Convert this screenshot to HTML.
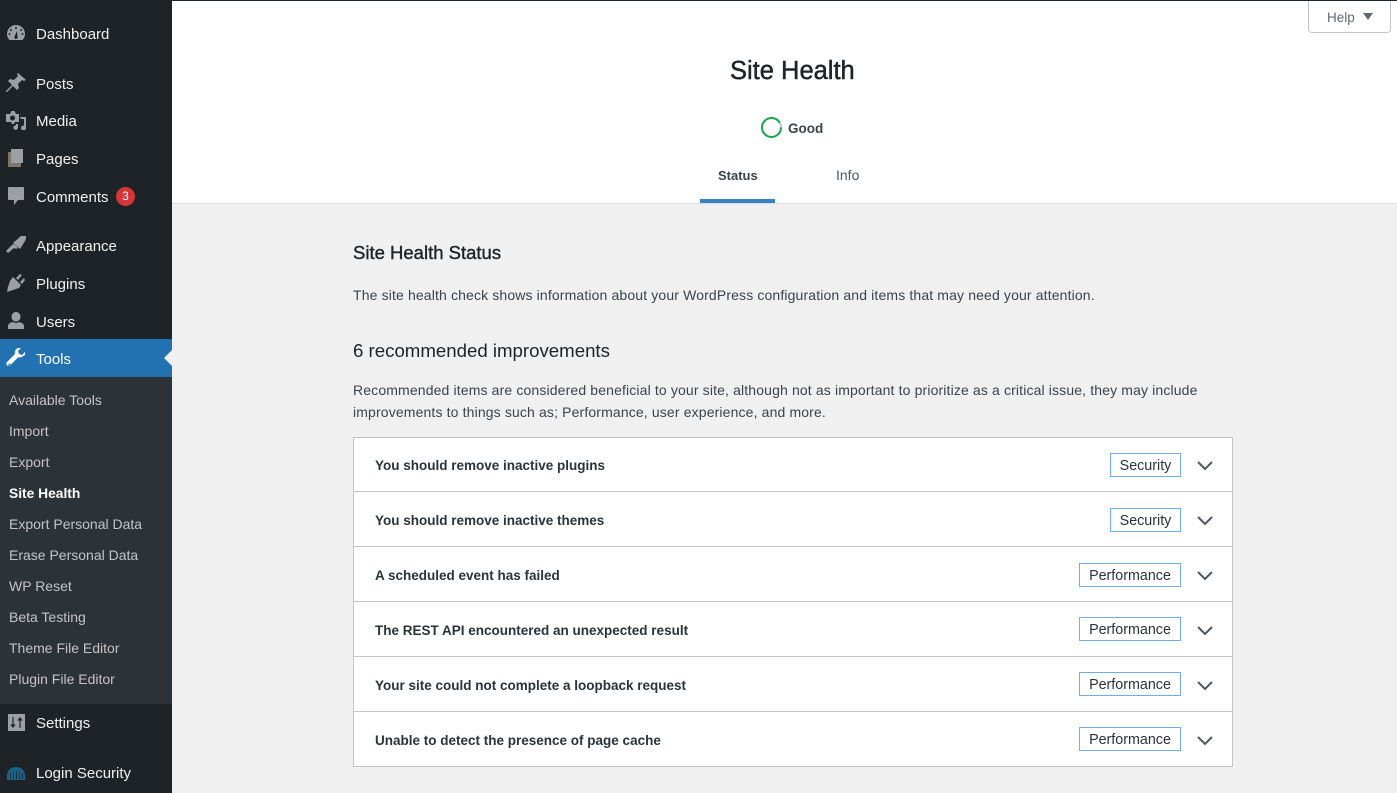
<!DOCTYPE html>
<html><head><meta charset="utf-8"><title>Site Health</title>
<style>
html,body{margin:0;padding:0}
body{position:relative;width:1397px;height:793px;overflow:hidden;background:#f0f0f1;font-family:"Liberation Sans",sans-serif;color:#3c434a;font-size:14px}
.a{position:absolute;white-space:nowrap;line-height:20px}
.m{left:36px;color:#f0f0f1;font-size:15px}
.s{left:9px;color:#c3c4c7;font-size:14px}
.i{position:absolute;left:6px;width:20px;height:20px;fill:#9ca0a4}
.row{position:absolute;left:354px;width:878px;border-top:1px solid #c3c4c7}
.t{left:375px;font-weight:700;font-size:13.5px;color:#2c3338}
.p{left:353px;font-size:14px;letter-spacing:.14px}
.b{position:absolute;border:1px solid #72aee6;height:22px;line-height:24px;font-size:14.3px;color:#2c3338;text-align:center;background:#fff}
.c{position:absolute;left:1197px;width:16px;height:10px;fill:none;stroke:#50575e;stroke-width:2}
</style></head><body>
<div style="position:absolute;left:0;top:0;width:172px;height:793px;background:#1d2327"></div>
<div style="position:absolute;left:0;top:339px;width:172px;height:38px;background:#2271b1"></div>
<div style="position:absolute;left:0;top:377px;width:172px;height:327px;background:#2c3338"></div>
<div style="position:absolute;left:164px;top:350px;border:8px solid transparent;border-left:0;border-right-color:#f0f0f1"></div>
<svg class="i" style="top:23px" viewBox="0 0 20 20"><path d="M10 2a9 9 0 0 0-9 9c0 2.500 1 4.500 2.500 6h13c1.500-1.500 2.500-3.500 2.500-6a9 9 0 0 0-9-9zm0 2a1 1 0 1 1 0 2 1 1 0 0 1 0-2zM5 6a1 1 0 1 1 0 2 1 1 0 0 1 0-2zm10 0a1 1 0 1 1 0 2 1 1 0 0 1 0-2zM3.500 10a1 1 0 1 1 0 2 1 1 0 0 1 0-2zm13 0a1 1 0 1 1 0 2 1 1 0 0 1 0-2zM11 8l.5 5.500a1.700 1.700 0 1 1-3 0z"/></svg>
<div class="a m" style="top:25px">Dashboard</div>
<svg class="i" style="top:73px" viewBox="0 0 20 20"><path d="M12 0l8 7-2 1-2-1-4 4 1 4-2 2-4-4-6 6H0v-1l6-6-4-4 2-2 4 1 4-4-1-2z"/></svg>
<div class="a m" style="top:75px">Posts</div>
<svg class="i" style="top:110px" viewBox="0 0 20 20"><path fill-rule="evenodd" d="M0 4h4l1.500-3h3L10 4h3v8H9l-1 2H6l-1-2H0zm6.500 1.500a2.500 2.500 0 1 0 0 5 2.500 2.500 0 0 0 0-5z"/><path d="M14 7h6v11a2.500 2.500 0 1 1-2-2.400V9h-3z"/><path d="M12 14v3.500a2.300 2.300 0 1 1-2-2.200V14z"/></svg>
<div class="a m" style="top:112px">Media</div>
<svg class="i" style="top:148px" viewBox="0 0 20 20"><path d="M2 4h4v11h9v4H2z" fill="#7c7768"/><path d="M5 1h12v14H5z"/></svg>
<div class="a m" style="top:150px">Pages</div>
<svg class="i" style="top:186px" viewBox="0 0 20 20"><path d="M3 1h14a1 1 0 0 1 1 1v11a1 1 0 0 1-1 1h-5l-4 5v-5H3a1 1 0 0 1-1-1V2a1 1 0 0 1 1-1z"/></svg>
<div class="a m" style="top:188px">Comments</div>
<div style="position:absolute;left:116px;top:187px;width:19px;height:19px;border-radius:50%;background:#d63638;color:#fff;font-size:12px;line-height:19px;text-align:center">3</div>
<svg class="i" style="top:235px" viewBox="0 0 20 20"><path d="M15 1h6l-2 5-5 8-7-6z"/><path d="M8 9l4 4-2 1-2-1-6 5-2-2 6-6z"/></svg>
<div class="a m" style="top:237px">Appearance</div>
<svg class="i" style="top:273px" viewBox="0 0 20 20"><path d="M7 4l8 8-2 3-3 1-6 2-3 1 1-5 2-6zM10 5l4-4 2 1-4 5zM14 9l4-4 1 2-3 4z"/></svg>
<div class="a m" style="top:275px">Plugins</div>
<svg class="i" style="top:311px" viewBox="0 0 20 20"><path d="M10 1a4.500 4.500 0 0 1 4.500 5c0 2.500-2 4.500-4.500 4.500S5.500 8.500 5.500 6A4.500 4.500 0 0 1 10 1zM7 11c2 1.200 4 1.200 6 0 3 .5 5 2 5 4v3H2v-3c0-2 2-3.500 5-4z"/></svg>
<div class="a m" style="top:313px">Users</div>
<svg class="i" style="top:348px;fill:#fff" viewBox="0 0 20 20"><path d="M19 4l-3 3-3-1-1-3 3-3c-2-.500-4 0-5 1.500-1.200 1.200-1.500 3-1 4.500l-8 8a2.200 2.200 0 0 0 3.200 3.200l8-8c1.500.5 3.300.2 4.500-1C18.900 7.900 19.500 6 19 4zM3.500 18a1.200 1.200 0 1 1 0-2.400 1.200 1.200 0 0 1 0 2.400z"/></svg>
<div class="a m" style="top:350px;color:#fff">Tools</div>
<div class="a s" style="top:390px">Available Tools</div>
<div class="a s" style="top:421px">Import</div>
<div class="a s" style="top:452px">Export</div>
<div class="a s" style="top:484px;color:#fff;font-weight:700;font-size:13.800px">Site Health</div>
<div class="a s" style="top:514px">Export Personal Data</div>
<div class="a s" style="top:545px">Erase Personal Data</div>
<div class="a s" style="top:576px">WP Reset</div>
<div class="a s" style="top:607px">Beta Testing</div>
<div class="a s" style="top:638px">Theme File Editor</div>
<div class="a s" style="top:669px">Plugin File Editor</div>
<svg style="position:absolute;left:8px;top:714px;width:17px;height:17px" viewBox="0 0 17 17"><rect width="17" height="17" fill="#9ca0a4"/><path d="M5 3v10M3 10.500l2 2.500 2-2.500M3 11h4M12 14V4M10 6.500L12 4l2 2.500M10 6h4" fill="none" stroke="#23282c" stroke-width="1.200"/></svg>
<div class="a m" style="top:714px">Settings</div>
<svg class="i" style="top:765px;left:7px;width:18px;height:16px;fill:#1b6288" viewBox="0 0 18 16"><path fill-rule="evenodd" d="M0 15V9C1 5 4 2 9 2s8 3 9 7v6zM3 8v6h.8V8zm3-2v8h.8V6zm3 0v8h.8V6zm3 0v8h.8V6zm3 2v6h.8V8z"/></svg>
<div class="a m" style="top:764px">Login Security</div>

<div style="position:absolute;left:172px;top:0;width:1225px;height:203px;background:#fff;border-bottom:1px solid #dcdcde"></div>
<div style="position:absolute;left:1308px;top:0;width:83px;height:33px;box-sizing:border-box;border:1px solid #c3c4c7;border-top:0;border-radius:0 0 4px 4px;background:#fff"></div>
<div style="position:absolute;left:172px;top:0;width:1225px;height:1px;background:#1d2327"></div>
<div class="a" style="left:1327px;top:8px;color:#646970;font-size:13.500px">Help</div>
<div style="position:absolute;left:1363px;top:13px;border:5px solid transparent;border-bottom:0;border-top:7px solid #646970"></div>
<div class="a" style="left:730px;top:57px;font-size:25.500px;line-height:28px;color:#1d2327;-webkit-text-stroke:.45px #1d2327">Site Health</div>
<svg style="position:absolute;left:761px;top:117px;width:21px;height:21px" viewBox="0 0 21 21"><circle cx="10.500" cy="10.500" r="9.500" fill="none" stroke="#c3c4c7" stroke-width="2"/><circle cx="10.500" cy="10.500" r="9.500" fill="none" stroke="#1aa84a" stroke-width="2" pathLength="100" stroke-dasharray="92 8"/></svg>
<div class="a" style="left:788px;top:119px;font-weight:700;font-size:13.500px;color:#3c434a">Good</div>
<div class="a" style="left:718px;top:166px;font-weight:700;font-size:13px;color:#3c434a">Status</div>
<div class="a" style="left:836px;top:165px;font-size:14px;color:#50575e">Info</div>
<div style="position:absolute;left:700px;top:199px;width:75px;height:4px;background:#3582c4"></div>

<div class="a" style="left:353px;top:243px;font-size:18.500px;color:#1d2327;-webkit-text-stroke:.4px #1d2327">Site Health Status</div>
<div class="a p" style="top:285px">The site health check shows information about your WordPress configuration and items that may need your attention.</div>
<div class="a" style="left:353px;top:341px;font-size:18.650px;color:#1d2327">6 recommended improvements</div>
<div class="a p" style="top:380px">Recommended items are considered beneficial to your site, although not as important to prioritize as a critical issue, they may include</div>
<div class="a p" style="top:402px">improvements to things such as; Performance, user experience, and more.</div>

<div style="position:absolute;left:353px;top:437px;width:878px;height:328px;background:#fff;border:1px solid #c3c4c7"></div>
<div class="row" style="top:491px"></div><div class="row" style="top:546px"></div><div class="row" style="top:601px"></div><div class="row" style="top:656px"></div><div class="row" style="top:711px"></div>

<div class="a t" style="top:456px">You should remove inactive plugins</div>
<div class="a t" style="top:511px">You should remove inactive themes</div>
<div class="a t" style="top:566px">A scheduled event has failed</div>
<div class="a t" style="top:621px">The REST API encountered an unexpected result</div>
<div class="a t" style="top:676px">Your site could not complete a loopback request</div>
<div class="a t" style="top:731px">Unable to detect the presence of page cache</div>

<div class="b" style="left:1110px;top:453px;width:69px">Security</div>
<div class="b" style="left:1110px;top:508px;width:69px">Security</div>
<div class="b" style="left:1079px;top:563px;width:100px">Performance</div>
<div class="b" style="left:1079px;top:617px;width:100px">Performance</div>
<div class="b" style="left:1079px;top:672px;width:100px">Performance</div>
<div class="b" style="left:1079px;top:727px;width:100px">Performance</div>

<svg class="c" style="top:461px" viewBox="0 0 16 10"><path d="M1 1l7 7 7-7"/></svg>
<svg class="c" style="top:516px" viewBox="0 0 16 10"><path d="M1 1l7 7 7-7"/></svg>
<svg class="c" style="top:571px" viewBox="0 0 16 10"><path d="M1 1l7 7 7-7"/></svg>
<svg class="c" style="top:626px" viewBox="0 0 16 10"><path d="M1 1l7 7 7-7"/></svg>
<svg class="c" style="top:681px" viewBox="0 0 16 10"><path d="M1 1l7 7 7-7"/></svg>
<svg class="c" style="top:736px" viewBox="0 0 16 10"><path d="M1 1l7 7 7-7"/></svg>
</body></html>
